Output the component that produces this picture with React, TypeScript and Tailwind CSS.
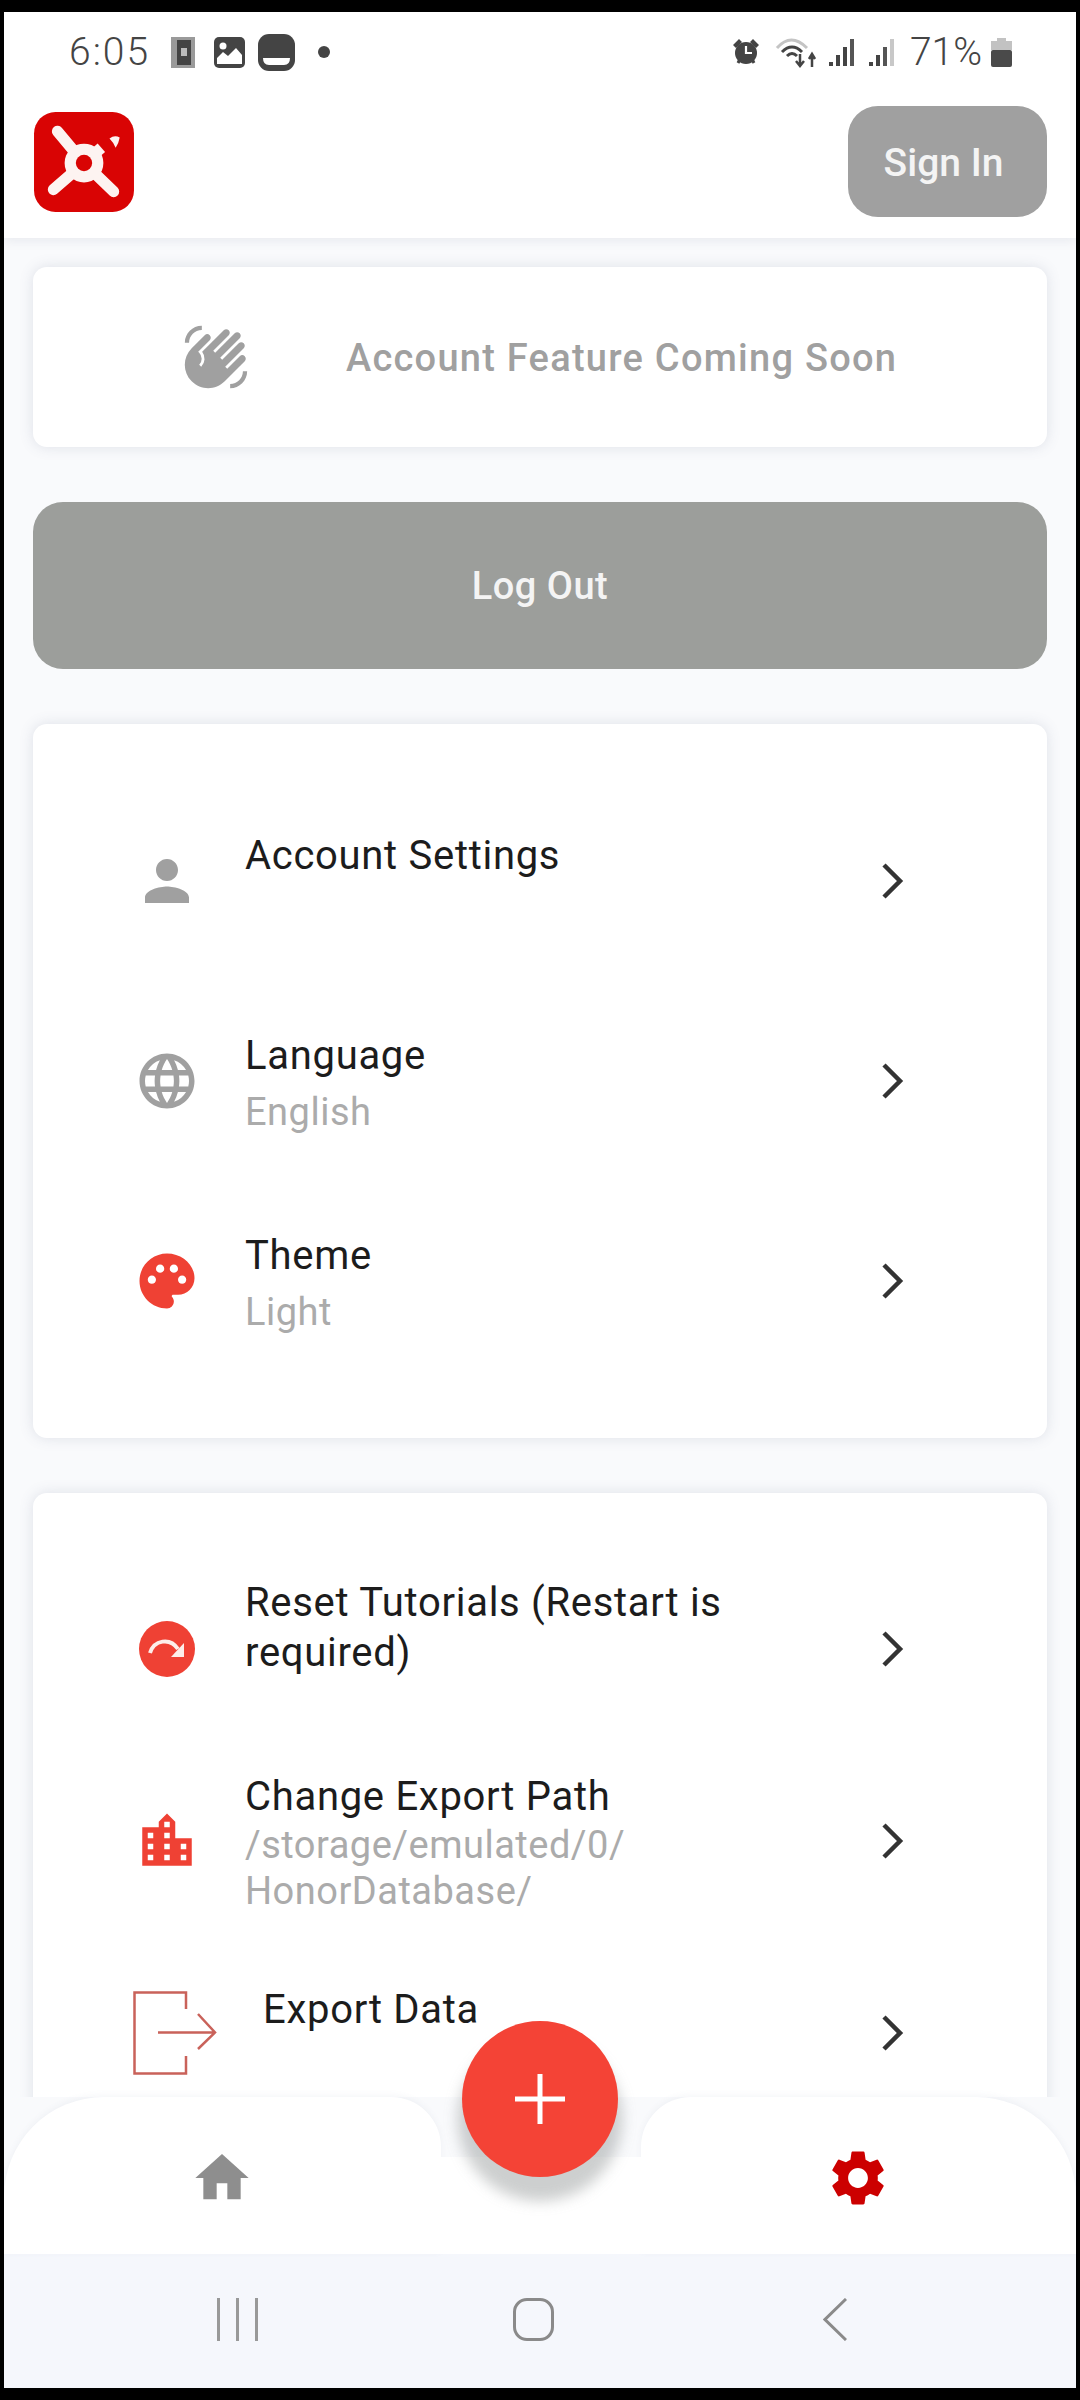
import type { ReactNode } from "react";
import {
  MdHome,
  MdLanguage,
  MdLocationCity,
  MdPalette,
  MdPerson,
  MdSettings,
  MdWavingHand,
} from "react-icons/md";

function Logo() {
  return (
    <svg viewBox="0 0 100 100" className="h-[102px] w-[102px]">
      <rect x="1" y="1" width="98" height="98" rx="21" fill="#d90404" />
      <g stroke="#fdf3f1" strokeWidth="11" strokeLinecap="round">
        <line x1="24" y1="20" x2="50" y2="51" />
        <line x1="20" y1="77" x2="50" y2="51" />
        <line x1="79" y1="79" x2="50" y2="51" />
        <line x1="50" y1="51" x2="67" y2="36" strokeLinecap="butt" />
      </g>
      <circle cx="50" cy="51" r="19" fill="#fdf3f1" />
      <circle cx="50" cy="51" r="8" fill="#d90404" />
      <path d="M75 27 Q80 23 85 26 Q84 32 81 36 Q79 31 75 27Z" fill="#fdf3f1" />
    </svg>
  );
}

function StatusLeftIcons() {
  return (
    <div className="ml-[21px] flex items-center">
      <svg viewBox="0 0 24 31" className="h-[31px] w-[24px]">
        <rect width="24" height="31" fill="#9a9a9a" />
        <rect x="6" y="3" width="14" height="25" fill="#444" />
        <rect x="10" y="11" width="6" height="8" fill="#bbb" />
      </svg>
      <svg viewBox="0 0 31 31" className="ml-[19px] h-[31px] w-[31px]">
        <rect width="31" height="31" rx="5" fill="#444" />
        <circle cx="9" cy="9" r="3.5" fill="#fff" />
        <path d="M3 27V21L9 15L14 19L22 11L28 18V27Z" fill="#fff" />
      </svg>
      <svg viewBox="0 0 37 37" className="ml-[13px] h-[37px] w-[37px]">
        <rect width="37" height="37" rx="11" fill="#444" />
        <path d="M5 24H32Q32 31 26 31H11Q5 31 5 24Z" fill="#fff" />
      </svg>
      <span className="ml-[23px] h-[12px] w-[12px] rounded-full bg-[#444]" />
    </div>
  );
}

function Signal({ bars }: { bars: string[] }) {
  return (
    <svg viewBox="0 0 28 28" className="h-[28px] w-[28px]">
      <rect x="1" y="24" width="4" height="4" fill={bars[0]} />
      <rect x="8" y="17" width="4" height="11" fill={bars[1]} />
      <rect x="15" y="9" width="4" height="19" fill={bars[2]} />
      <rect x="22" y="1" width="4" height="27" fill={bars[3]} />
    </svg>
  );
}

function StatusRightIcons() {
  return (
    <div className="flex items-center">
      <svg viewBox="0 0 28 28" className="h-[28px] w-[28px]">
        <path d="M1 7L7 1L10 4L4 10ZM27 7L21 1L18 4L24 10Z" fill="#444" />
        <path d="M6 25L8 21M22 25L20 21" stroke="#444" strokeWidth="3" />
        <circle cx="14" cy="15" r="11" fill="#444" />
        <path d="M14 8V15H20" stroke="#fff" strokeWidth="2.2" fill="none" />
      </svg>
      <svg viewBox="0 0 42 34" className="ml-[15px] h-[34px] w-[42px]" fill="none">
        <path d="M2 13Q16 -3 32 13" stroke="#c4c4c4" strokeWidth="3" />
        <path d="M7 17Q17 7 27 17" stroke="#444" strokeWidth="3" />
        <path d="M12 21Q17 16 22 21" stroke="#444" strokeWidth="3" />
        <path d="M25 19V30M21 26L25 31L29 26" stroke="#444" strokeWidth="2.5" />
        <path d="M37 32V20M34 24L37 19L40 24" stroke="#444" strokeWidth="2.5" />
      </svg>
      <div className="ml-[11px]">
        <Signal bars={["#444", "#444", "#444", "#555"]} />
      </div>
      <div className="ml-[12px]">
        <Signal bars={["#444", "#444", "#555", "#c8c8c8"]} />
      </div>
      <span className="ml-[14px] text-[39px] leading-none font-light text-[#444]">
        71%
      </span>
      <svg viewBox="0 0 21 29" className="ml-[9px] h-[29px] w-[21px]">
        <path d="M6 0H15V3H21V12H0V3H6Z" fill="#c2c2c2" />
        <rect y="12" width="21" height="17" rx="2" fill="#4a4a4a" />
      </svg>
    </div>
  );
}

function ExportIcon() {
  return (
    <svg viewBox="0 0 84 84" className="-ml-px h-[84px] w-[84px]" fill="none">
      <path
        d="M53 18V1.5H1.5V82.5H53V65"
        stroke="#c9625a"
        strokeWidth="2.5"
      />
      <path
        d="M25 41.5H81M65 23L82 41.5L65 58"
        stroke="#c9625a"
        strokeWidth="2.5"
      />
    </svg>
  );
}

function ResetIcon() {
  return (
    <svg viewBox="0 0 66 66" className="h-[66px] w-[66px]">
      <circle cx="33" cy="33" r="28" fill="#ef4134" />
      <path
        d="M16 37C20 24 36 21 44 33"
        stroke="#fdeeea"
        strokeWidth="4"
        fill="none"
      />
      <path d="M50 27V41H37Z" fill="#fdeeea" />
    </svg>
  );
}

function Chevron() {
  return (
    <svg viewBox="0 0 64 64" className="h-[64px] w-[64px] shrink-0" fill="none">
      <path d="M24 16L40 32L24 48" stroke="#333" strokeWidth="4.5" />
    </svg>
  );
}

type RowProps = {
  icon: ReactNode;
  title: ReactNode;
  sub?: ReactNode;
  rowClass: string;
  subClass?: string;
  gapClass?: string;
};

function Row({ icon, title, sub, rowClass, subClass = "", gapClass = "ml-[45px]" }: RowProps) {
  return (
    <div className={`flex items-center pr-[123px] pl-[101px] ${rowClass}`}>
      {icon}
      <div className={`min-w-0 flex-1 pt-[3px] ${gapClass}`}>
        <div className="text-[40px] leading-[50px] tracking-[0.7px] text-[#1c1c1c]">{title}</div>
        <div className={`min-h-[46px] text-[38px] leading-[46px] tracking-[0.5px] text-[#ababab] ${subClass}`}>
          {sub}
        </div>
      </div>
      <Chevron />
    </div>
  );
}

export default function App() {
  return (
    <div className="h-[2400px] w-[1080px] bg-black px-1 py-3 font-['Roboto',sans-serif]">
      <div className="flex h-full flex-col overflow-hidden bg-[#f9fafc]">
        <div className="relative z-10 bg-white shadow-[0_3px_10px_rgba(90,100,130,0.1)]">
          <div className="flex h-[80px] items-center justify-between pr-[64px] pl-[65px]">
            <div className="flex items-center">
              <span className="text-[39px] leading-none font-light tracking-[2px] text-[#444]">6:05</span>
              <StatusLeftIcons />
            </div>
            <StatusRightIcons />
          </div>
          <div className="flex h-[146px] items-start justify-between pt-[14px] pr-[29px] pl-[29px]">
            <div className="pt-[5px]">
              <Logo />
            </div>
            <button className="h-[111px] w-[199px] rounded-[30px] bg-[#a0a0a0] pt-[4px] pr-[8px] text-[39px] font-medium text-[#f4f4f4]">
              Sign In
            </button>
          </div>
        </div>

        <main className="flex min-h-0 flex-1 flex-col gap-[55px] overflow-hidden px-[29px] pt-[29px]">
          <section className="flex h-[180px] shrink-0 items-center rounded-[14px] bg-white pl-[149px] shadow-[0_0_14px_rgba(90,100,130,0.17)]">
            <MdWavingHand className="h-[68px] w-[68px] text-[#a0a0a0]" />
            <span className="mt-[2px] ml-[96px] text-[38px] font-medium tracking-[1.25px] text-[#a0a0a0]">
              Account Feature Coming Soon
            </span>
          </section>

          <button className="h-[167px] shrink-0 rounded-[30px] bg-[#9c9e9b] pt-[2px] text-[38px] font-medium tracking-[0.5px] text-[#f4f4f4]">
            Log Out
          </button>

          <section className="shrink-0 rounded-[14px] bg-white pt-[57px] pb-[57px] shadow-[0_0_14px_rgba(90,100,130,0.17)]">
            <Row
              rowClass="h-[200px]"
              subClass="mt-[8px]"
              icon={<MdPerson className="h-[66px] w-[66px] shrink-0 text-[#a0a0a0]" />}
              title="Account Settings"
            />
            <Row
              rowClass="h-[200px]"
              subClass="mt-[8px]"
              icon={<MdLanguage className="h-[66px] w-[66px] shrink-0 text-[#a0a0a0]" />}
              title="Language"
              sub="English"
            />
            <Row
              rowClass="h-[200px]"
              subClass="mt-[8px]"
              icon={<MdPalette className="h-[66px] w-[66px] shrink-0 text-[#ef4134]" />}
              title="Theme"
              sub="Light"
            />
          </section>

          <section className="shrink-0 rounded-[14px] bg-white pt-[60px] pb-[60px] shadow-[0_0_14px_rgba(90,100,130,0.17)]">
            <Row rowClass="h-[192px]" icon={<ResetIcon />} title="Reset Tutorials (Restart is required)" />
            <Row
              rowClass="h-[192px]"
              icon={<MdLocationCity className="h-[66px] w-[66px] shrink-0 text-[#ef4134]" />}
              title="Change Export Path"
              sub={
                <>
                  /storage/emulated/0/
                  <br />
                  HonorDatabase/
                </>
              }
            />
            <Row
              rowClass="h-[192px]"
              subClass="mb-[4px]"
              gapClass="ml-[46px]"
              icon={<ExportIcon />}
              title="Export Data"
            />
          </section>
        </main>

        {/* bottom bar: two lobes with the notch between them, fab sits over the gap */}
        <nav className="relative flex h-[157px] shrink-0">
          <div className="flex flex-1 items-center rounded-tl-[100px] rounded-tr-[50px] bg-white pl-[186px] shadow-[0_-2px_6px_rgba(90,100,130,0.06)]">
            <MdHome className="mt-[4px] h-[64px] w-[64px] text-[#8e8e8e]" />
          </div>
          <div className="relative z-[1] mt-[60px] w-[200px] bg-white" />
          <div className="flex flex-1 items-center justify-end rounded-tl-[50px] rounded-tr-[100px] bg-white pr-[185px] shadow-[0_-2px_6px_rgba(90,100,130,0.06)]">
            <MdSettings className="mt-[4px] h-[66px] w-[66px] text-[#cc0000]" />
          </div>
          <button className="absolute top-[-76px] left-[458px] z-[2] flex h-[156px] w-[156px] items-center justify-center rounded-full bg-[#f44336] shadow-[0_20px_14px_4px_rgba(130,135,135,0.4)]">
            <svg viewBox="0 0 50 50" className="h-[50px] w-[50px]">
              <path d="M25 0V50M0 25H50" stroke="#fff" strokeWidth="5" />
            </svg>
          </button>
        </nav>

        <div className="flex h-[134px] shrink-0 items-center bg-[#f5f7fc] pb-[4px]">
          <div className="ml-[213px] flex h-[43px] gap-[16px]">
            <span className="w-[3px] bg-[#999]" />
            <span className="w-[3px] bg-[#999]" />
            <span className="w-[3px] bg-[#999]" />
          </div>
          <div className="ml-[255px] h-[43px] w-[41px] rounded-[14px] border-[3px] border-[#8a8a8a]" />
          <svg viewBox="0 0 24 43" className="ml-[269px] h-[43px] w-[24px]" fill="none">
            <path d="M23 1L2 21.5L23 42" stroke="#8a8a8a" strokeWidth="3" />
          </svg>
        </div>
      </div>
    </div>
  );
}
